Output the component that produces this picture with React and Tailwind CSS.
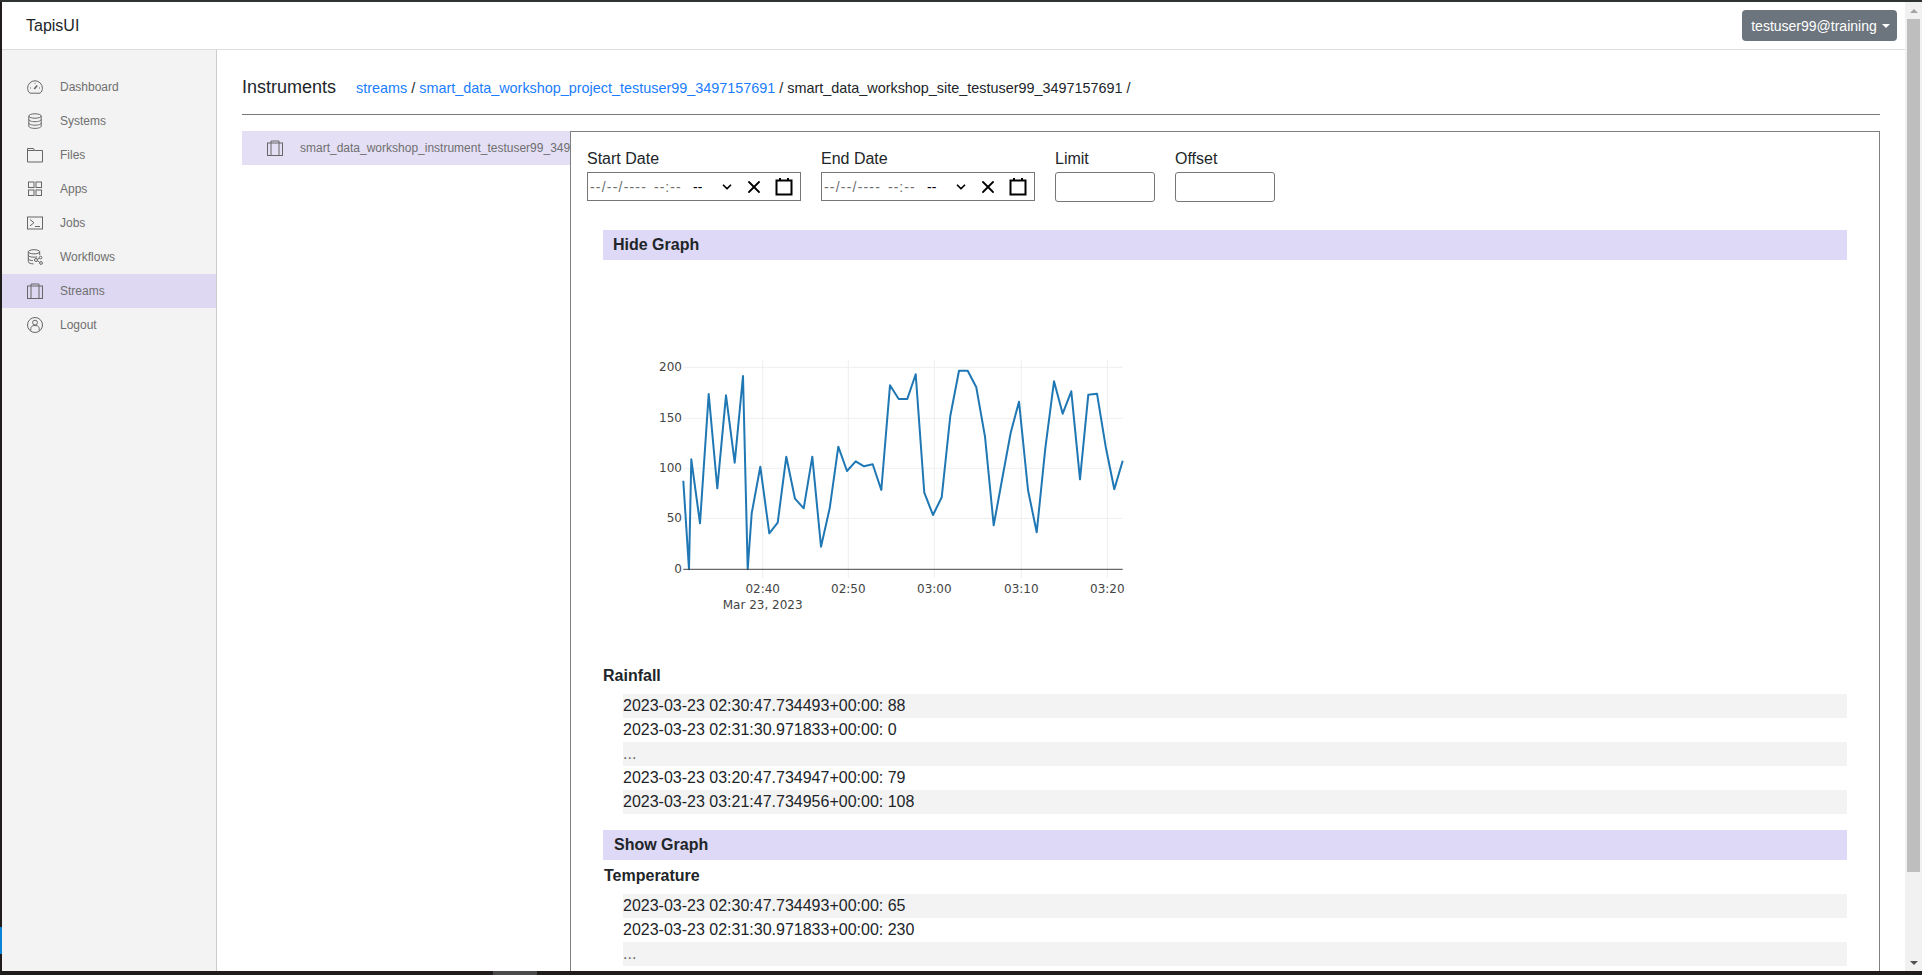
import { X, ChevronDown } from "lucide-react";

const navItems = [
  { label: "Dashboard", icon: <DashboardIcon /> },
  { label: "Systems", icon: <SystemsIcon /> },
  { label: "Files", icon: <FilesIcon /> },
  { label: "Apps", icon: <AppsIcon /> },
  { label: "Jobs", icon: <JobsIcon /> },
  { label: "Workflows", icon: <WorkflowsIcon /> },
  { label: "Streams", icon: <StreamsIcon />, active: true },
  { label: "Logout", icon: <LogoutIcon /> },
];

const rainfallRows = [
  "2023-03-23 02:30:47.734493+00:00: 88",
  "2023-03-23 02:31:30.971833+00:00: 0",
  "...",
  "2023-03-23 03:20:47.734947+00:00: 79",
  "2023-03-23 03:21:47.734956+00:00: 108",
];

const temperatureRows = [
  "2023-03-23 02:30:47.734493+00:00: 65",
  "2023-03-23 02:31:30.971833+00:00: 230",
  "...",
];

// traced from the plot, x/y at 3x
const linePoints = [
  [190, 422], [207, 688], [214, 358], [240, 550], [266, 162], [292, 445], [318, 166], [344, 368], [369, 108],
  [383, 688], [395, 520], [421, 380], [448, 580], [473, 548], [499, 350], [525, 476], [551, 505], [577, 350],
  [603, 620], [629, 505], [655, 320], [681, 393], [707, 364], [732, 379], [758, 373], [784, 450], [810, 136],
  [836, 177], [862, 177], [887, 103], [913, 458], [939, 525], [965, 472], [991, 228], [1017, 92], [1043, 92],
  [1069, 142], [1095, 290], [1121, 556], [1147, 415], [1172, 278], [1197, 185], [1224, 450], [1250, 577],
  [1276, 325], [1302, 124], [1328, 221], [1354, 154], [1380, 418], [1405, 164], [1431, 161], [1457, 320],
  [1483, 448], [1508, 362],
];

export default function App() {
  return (
    <div className="flex h-[975px] w-[1922px] flex-col overflow-hidden bg-[#201c1c] font-['Liberation_Sans',Arial,sans-serif] text-[16px] leading-6 text-[#212529]">
      <div className="h-[2px] bg-[#2f3333]" />
      <div className="flex min-h-0 flex-1">
        <div className="w-[2px] shrink-0">
          <div className="mt-[925px] h-[27px] bg-[#0a84d8]" />
        </div>
        <div className="flex min-w-0 flex-1 flex-col bg-white">
          <Header />
          <div className="flex min-h-0 flex-1">
            <Sidebar />
            <Content />
          </div>
        </div>
        <Scrollbar />
      </div>
      <div className="h-[4px]">
        <div className="ml-[493px] h-full w-[44px] bg-[#4a4a4a]" />
      </div>
    </div>
  );
}

function Header() {
  return (
    <header className="box-border flex h-[48px] shrink-0 items-center justify-between border-b border-[#dcdcdc] pl-[24px] pr-[8px]">
      <span className="text-[16px] text-[#212529]">TapisUI</span>
      <button className="flex h-[31px] w-[155px] items-center justify-center rounded bg-[#6c757d] pl-[2px] text-[14px] text-white">
        testuser99@training
        <span className="ml-[5px] mt-[1px] h-0 w-0 border-x-[4px] border-t-[4px] border-x-transparent border-t-white" />
      </button>
    </header>
  );
}

function Sidebar() {
  return (
    <nav className="box-border w-[215px] shrink-0 border-r border-[#cccccc] bg-[#f3f3f3] pt-[20px]">
      {navItems.map((item) => (
        <div
          key={item.label}
          className={`flex h-[34px] items-center pl-[25px] text-[12px] text-[#6f6f6f] ${item.active ? "bg-[#ded8f2]" : ""}`}
        >
          <span className="w-[33px] shrink-0">{item.icon}</span>
          {item.label}
        </div>
      ))}
    </nav>
  );
}

function Content() {
  return (
    <main className="flex min-w-0 flex-1 flex-col pl-[25px] pr-[25px]">
      <div className="box-border flex h-[65px] shrink-0 items-center border-b border-[#777777] pt-[10px]">
        <h1 className="text-[18px]">Instruments</h1>
        <div className="ml-[20px] mt-[2px] text-[14.4px]">
          <span className="text-[#1a7dff]">streams</span> /{" "}
          <span className="text-[#1a7dff]">smart_data_workshop_project_testuser99_3497157691</span> /{" "}
          smart_data_workshop_site_testuser99_3497157691 /
        </div>
      </div>
      <div className="mt-[16px] flex min-h-0 flex-1">
        <div className="w-[328px] shrink-0 overflow-hidden">
          <div className="flex h-[34px] items-center whitespace-nowrap bg-[#e4dff5] pl-[25px] text-[12px] text-[#6f6f6f]">
            <span className="w-[33px] shrink-0"><StreamsIcon /></span>
            smart_data_workshop_instrument_testuser99_3497157691
          </div>
        </div>
        <Panel />
      </div>
    </main>
  );
}

function Panel() {
  return (
    <section className="min-w-0 flex-1 overflow-hidden border-x border-t border-[#808080] px-[32px]">
      <div className="-mx-[16px] flex gap-[20px] pt-[15px]">
        <Field label="Start Date"><DateBox /></Field>
        <Field label="End Date"><DateBox /></Field>
        <Field label="Limit"><NumberBox /></Field>
        <Field label="Offset"><NumberBox /></Field>
      </div>

      <SectionBar title="Hide Graph" className="mt-[28px] pl-[10px]" />
      <div className="ml-[17px] mt-[80px]">
        <Chart />
      </div>

      <h3 className="mt-[34px] font-bold">Rainfall</h3>
      <Rows rows={rainfallRows} />

      <SectionBar title="Show Graph" className="mt-[16px] pl-[11px]" />
      <h3 className="ml-[1px] mt-[4px] font-bold">Temperature</h3>
      <Rows rows={temperatureRows} />
    </section>
  );
}

function Field({ label, children }) {
  return (
    <div className="shrink-0">
      <div className="mb-[1px] text-[16px]">{label}</div>
      {children}
    </div>
  );
}

function DateBox() {
  return (
    <div className="box-border flex h-[29px] w-[214px] items-center border border-[#767676] pl-[2px] text-[14px]">
      <span className="w-[64px] tracking-[1.2px] text-[#6f6f6f]">--/--/----</span>
      <span className="w-[39px] tracking-[1px] text-[#6f6f6f]">--:--</span>
      <span className="w-[27px] text-black">--</span>
      <ChevronDown size={14} strokeWidth={3} className="text-black" />
      <X size={20} strokeWidth={2.2} className="ml-[10px] text-black" />
      <CalendarIcon />
    </div>
  );
}

function NumberBox() {
  return <div className="box-border h-[30px] w-[100px] rounded-[3px] border border-[#767676]" />;
}

function SectionBar({ title, className }) {
  return <div className={`flex h-[30px] items-center bg-[#ded9f6] font-bold ${className}`}>{title}</div>;
}

function Rows({ rows }) {
  return (
    <div className="ml-[20px] mt-[6px]">
      {rows.map((row, i) => (
        <div key={i} className={`h-[24px] ${i % 2 === 0 ? "bg-[#f3f3f3]" : ""} ${row === "..." ? "text-[#666666]" : ""}`}>
          {row}
        </div>
      ))}
    </div>
  );
}

function Chart() {
  const yTicks = [[27.3, "200"], [78.3, "150"], [128.3, "100"], [178.3, "50"], [229.3, "0"]];
  const xTicks = [[142.7, "02:40"], [228.3, "02:50"], [314.3, "03:00"], [401.3, "03:10"], [487.3, "03:20"]];
  const points = linePoints.map(([x, y]) => `${(x / 3).toFixed(1)},${(y / 3).toFixed(1)}`).join(" ");
  return (
    <svg width="520" height="290" viewBox="0 0 520 290" className="block font-['DejaVu_Sans',Verdana,sans-serif]">
      {xTicks.map(([x]) => (
        <line key={x} x1={x} x2={x} y1="20" y2="238" stroke="#eeeeee" />
      ))}
      {yTicks.slice(0, 4).map(([y]) => (
        <line key={y} x1="63.3" x2="502.7" y1={y} y2={y} stroke="#eeeeee" />
      ))}
      <polyline points={points} fill="none" stroke="#1f77b4" strokeWidth="2" strokeLinejoin="round" />
      <line x1="63.3" x2="502.7" y1="229.3" y2="229.3" stroke="#444444" />
      {yTicks.map(([y, label]) => (
        <text key={label} x="62" y={y + 4} textAnchor="end" fontSize="12" fill="#444444">{label}</text>
      ))}
      {xTicks.map(([x, label]) => (
        <text key={label} x={x} y="252.5" textAnchor="middle" fontSize="12" fill="#444444">{label}</text>
      ))}
      <text x="142.7" y="268.5" textAnchor="middle" fontSize="12" fill="#444444">Mar 23, 2023</text>
    </svg>
  );
}

function Scrollbar() {
  return (
    <div className="flex w-[17px] shrink-0 flex-col items-center bg-[#f1f1f1]">
      <div className="flex h-[17px] items-center justify-center">
        <span className="h-0 w-0 border-x-[4px] border-b-[4px] border-x-transparent border-b-[#a3a3a3]" />
      </div>
      <div className="h-[853px] w-[13px] bg-[#bebebe]" />
      <div className="mt-auto flex h-[17px] items-center justify-center">
        <span className="h-0 w-0 border-x-[4px] border-t-[4px] border-x-transparent border-t-[#505050]" />
      </div>
    </div>
  );
}

function CalendarIcon() {
  return (
    <svg width="18" height="18" viewBox="0 0 18 18" className="ml-[11px]" fill="none" stroke="#000000">
      <rect x="1.5" y="2.5" width="15" height="14" strokeWidth="2" />
      <line x1="5" x2="5" y1="0" y2="3" strokeWidth="2" />
      <line x1="13" x2="13" y1="0" y2="3" strokeWidth="2" />
    </svg>
  );
}

function Glyph({ children }) {
  return (
    <svg width="16" height="16" viewBox="0 0 16 16" fill="none" stroke="#666666" strokeWidth="1" className="block">
      {children}
    </svg>
  );
}

function DashboardIcon() {
  return (
    <Glyph>
      <path d="M3 14.2C1.4 13 .6 11.2.6 9.2a7.4 7.4 0 0 1 14.8 0c0 2-.8 3.8-2.4 5z" />
      <path d="M7.2 10l3-3.6" strokeWidth="1.6" />
      <path d="M3 9h1M8 3.8v1M12 9h1" />
    </Glyph>
  );
}

function SystemsIcon() {
  return (
    <Glyph>
      <ellipse cx="8" cy="3" rx="6.2" ry="2.2" />
      <path d="M1.8 3v10.2c0 1.2 2.8 2.2 6.2 2.2s6.2-1 6.2-2.2V3" />
      <path d="M1.8 6.5c0 1.2 2.8 2.2 6.2 2.2s6.2-1 6.2-2.2M1.8 10c0 1.2 2.8 2.2 6.2 2.2s6.2-1 6.2-2.2" />
    </Glyph>
  );
}

function FilesIcon() {
  return (
    <Glyph>
      <path d="M.5 15V1.5h6l1 2h8V15z" />
      <path d="M.5 3.5h7" />
    </Glyph>
  );
}

function AppsIcon() {
  return (
    <Glyph>
      <rect x="1.5" y="1" width="5.5" height="5.5" />
      <rect x="9" y="1" width="5.5" height="5.5" />
      <rect x="1.5" y="9" width="5.5" height="5.5" />
      <rect x="9" y="9" width="5.5" height="5.5" />
    </Glyph>
  );
}

function JobsIcon() {
  return (
    <Glyph>
      <rect x="0.5" y="2" width="15" height="12" />
      <path d="M3 4.5l4 3.2-4 3.2M8 11.5h5" />
    </Glyph>
  );
}

function WorkflowsIcon() {
  return (
    <Glyph>
      <ellipse cx="7" cy="2.8" rx="5.7" ry="2.1" />
      <path d="M1.3 2.8v10c0 1.1 2.3 2 5.2 2.1M12.7 2.8v3.4" />
      <path d="M1.3 6.2c0 1.1 2.5 2 5.7 2 1.2 0 2.3-.1 3.2-.4M1.3 9.6c0 1.1 2 1.9 4.6 2" />
      <circle cx="9" cy="11" r="1.5" />
      <circle cx="13.6" cy="8.6" r="1.3" />
      <circle cx="14" cy="14" r="1.4" />
      <path d="M10.3 10.3l2-1M10.4 11.8l2.3 1.4" />
    </Glyph>
  );
}

function StreamsIcon() {
  return (
    <Glyph>
      <rect x="0.5" y="3" width="15" height="12.5" />
      <path d="M4 15.5V1h8v14.5" />
    </Glyph>
  );
}

function LogoutIcon() {
  return (
    <Glyph>
      <circle cx="8" cy="8" r="7.5" />
      <circle cx="8" cy="5.6" r="2.4" />
      <path d="M3.8 13.6v-2c0-1.7 1.4-3 3-3h2.4c1.6 0 3 1.3 3 3v2" />
    </Glyph>
  );
}
